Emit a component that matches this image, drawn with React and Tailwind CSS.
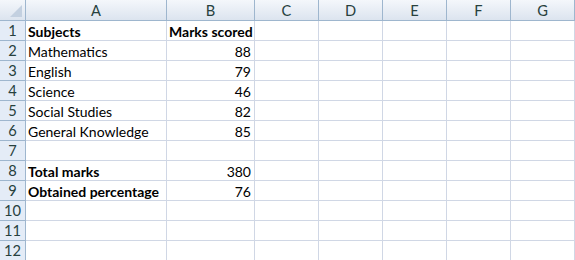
const cols = ['A', 'B', 'C', 'D', 'E', 'F', 'G'];

const rows = [
  ['Subjects', 'Marks scored', true],
  ['Mathematics', '88'],
  ['English', '79'],
  ['Science', '46'],
  ['Social Studies', '82'],
  ['General Knowledge', '85'],
  ['', ''],
  ['Total marks', '380', true],
  ['Obtained percentage', '76', true],
  ['', ''],
  ['', ''],
  ['', ''],
];

export default function App() {
  return (
    <div
      className="w-[575px] h-[260px] overflow-hidden bg-white text-[14px] text-black"
      style={{ fontFamily: 'Lato, "Open Sans", sans-serif' }}
    >
      <div className="grid grid-cols-[26px_141px_88px_64px_64px_64px_64px_64px] auto-rows-[20px] grid-rows-[21px]">
        {/* Corner */}
        <div className="relative border-r border-b border-[#9eb6ce] bg-gradient-to-b from-[#f4f7fb] to-[#dce4ef]">
          <div className="absolute right-[3px] bottom-[3px] w-0 h-0 border-l-[12px] border-l-transparent border-b-[12px] border-b-[#c3d0e0]" />
        </div>
        {cols.map((c) => (
          <div
            key={c}
            className="flex items-center justify-center pt-[1px] border-r border-b border-[#9eb6ce] bg-gradient-to-b from-[#f4f7fb] to-[#dce4ef] text-[#27413e] text-[14.67px]"
          >
            {c}
          </div>
        ))}

        {rows.map(([a, b, bold], i) => (
          <Row key={i} n={i + 1} a={a} b={b} bold={bold} />
        ))}
      </div>
    </div>
  );
}

function Row({ n, a, b, bold }) {
  const isNum = b !== '' && !isNaN(Number(b));
  return (
    <>
      <div className="flex items-center justify-center pt-[1px] border-r border-b border-[#9eb6ce] bg-[#e4ecf7] text-[#27413e] text-[14.67px] leading-none">
        {n}
      </div>
      <div className={`flex items-center pl-[2px] pt-[2px] border-r border-b border-[#d0d7e5] whitespace-nowrap leading-none ${bold ? 'font-bold' : ''}`}>
        {a}
      </div>
      <div className={`flex items-center pt-[2px] border-r border-b border-[#d0d7e5] whitespace-nowrap leading-none ${isNum ? 'justify-end pr-[3px]' : 'pl-[2px] font-bold'}`}>
        {b}
      </div>
      {[0, 1, 2, 3, 4].map((k) => (
        <div key={k} className="border-r border-b border-[#d0d7e5]" />
      ))}
    </>
  );
}
